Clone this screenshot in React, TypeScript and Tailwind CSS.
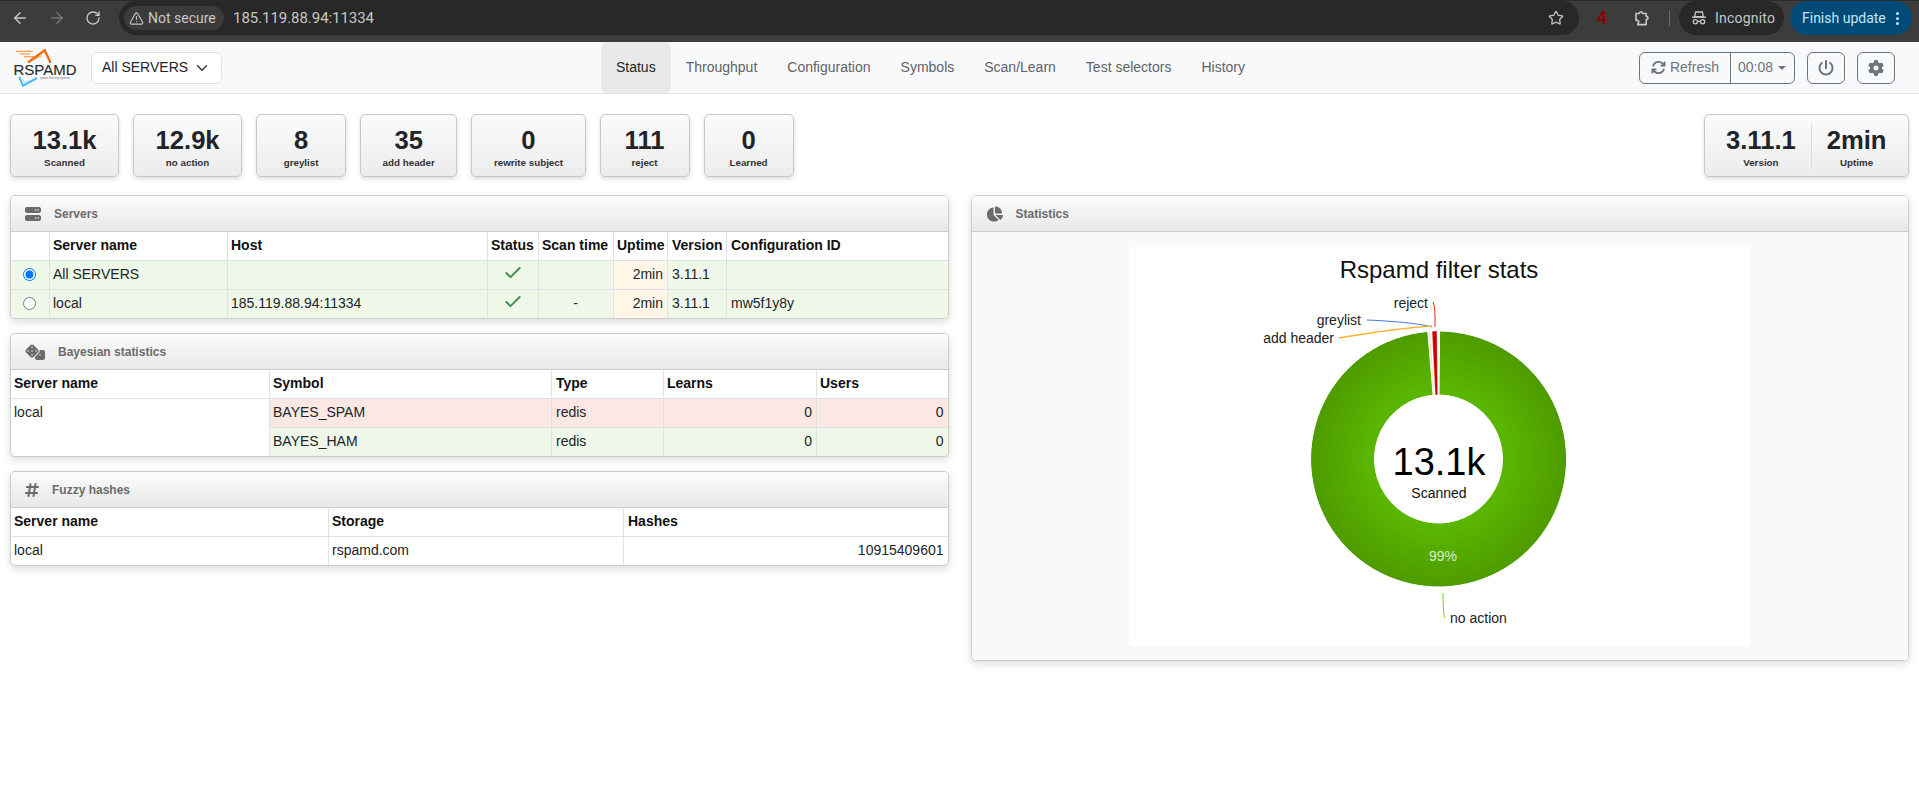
import React from "react";
import { ArrowLeft, ArrowRight, RotateCw, TriangleAlert, Star, Check } from "lucide-react";
import { FaArrowsRotate, FaPowerOff, FaGear, FaServer, FaDice, FaHashtag, FaChartPie } from "react-icons/fa6";

const CX = 309.5;
const CY = 212;

function arc(a0: number, a1: number, r0 = 64, r1 = 128): string {
  const p = (a: number, r: number) => {
    const t = (a * Math.PI) / 180;
    return `${(CX + r * Math.sin(t)).toFixed(2)} ${(CY - r * Math.cos(t)).toFixed(2)}`;
  };
  const large = a1 - a0 > 180 ? 1 : 0;
  return `M${p(a0, r1)} A${r1} ${r1} 0 ${large} 1 ${p(a1, r1)} L${p(a1, r0)} A${r0} ${r0} 0 ${large} 0 ${p(a0, r0)} Z`;
}

function Logo() {
  return (
    <svg width="70" height="44" viewBox="10 46 70 44" className="shrink-0">
      <path d="M14.7 51.3 L32 51.3 M19 54 L29 54 M23 56.8 L33 56.8" stroke="#f58a2a" strokeWidth="1.1" fill="none" />
      <path d="M27 62.5 L43.7 50.2 L49.7 63" stroke="#f26a12" strokeWidth="2.3" fill="none" strokeLinejoin="miter" />
      <path d="M31 60.5 L41 55.5" stroke="#f58a2a" strokeWidth="0.9" fill="none" />
      <text x="12.5" y="74.8" fontSize="15" fill="#2b2b2b" fontFamily="Liberation Sans, sans-serif" stroke="#2b2b2b" strokeWidth="0.15">RSPAMD</text>
      <text x="39" y="79.3" fontSize="3.2" fill="#777" fontFamily="Liberation Sans, sans-serif">spam filtering system</text>
      <path d="M18.2 77 L22 85.8 L36 78" stroke="#4fb9f2" strokeWidth="2.1" fill="none" />
      <path d="M21.5 79 L24 83 L29 80" stroke="#8fd4f7" strokeWidth="0.8" fill="none" />
    </svg>
  );
}

function IncognitoIcon() {
  return (
    <svg width="16" height="16" viewBox="0 0 16 16" fill="none" className="text-[#c7c7c7]">
      <path d="M4.6 2 L11.4 2 L12.3 6.6 L3.7 6.6 Z" stroke="currentColor" strokeWidth="1.3" />
      <path d="M1 7.2 H15" stroke="currentColor" strokeWidth="1.4" />
      <circle cx="4.4" cy="11.8" r="2.1" stroke="currentColor" strokeWidth="1.3" />
      <circle cx="11.6" cy="11.8" r="2.1" stroke="currentColor" strokeWidth="1.3" />
      <path d="M6.5 11.4 H9.5" stroke="currentColor" strokeWidth="1.3" />
    </svg>
  );
}

function ExtensionIcon() {
  return (
    <svg width="18" height="18" viewBox="0 0 18 18" fill="none" className="text-[#c7c7c7]">
      <path
        d="M3 4.5 H6.4 C6.3 2.2 9.7 2.2 9.6 4.5 H13.2 V7.4 C15.6 7.3 15.6 10.7 13.2 10.6 V15.6 H4.6 L5.6 13.4 C6 12.4 5.2 11.4 4.2 11.4 H3 Z"
        stroke="currentColor"
        strokeWidth="1.6"
        strokeLinejoin="round"
      />
    </svg>
  );
}

function BrowserBar() {
  return (
    <div className="h-[42px] bg-[#3c3c3c] border-t border-[#2b2b2b] flex items-start font-['Roboto',sans-serif] text-[#c7c7c7]">
      <div className="flex items-center h-[34px] w-[119px] pl-[11px] gap-[19px] shrink-0">
        <ArrowLeft size={18} strokeWidth={2} />
        <ArrowRight size={18} strokeWidth={2} className="text-[#757575]" />
        <RotateCw size={16} strokeWidth={2} />
      </div>
      <div className="flex-1 h-[34px] bg-[#282828] rounded-full flex items-center pl-[5px] pr-[15px]">
        <div className="h-[24px] w-[100px] rounded-full bg-[#3b3b3b] flex items-center pl-[5px] gap-[4px] text-[14px] shrink-0">
          <TriangleAlert size={15} strokeWidth={1.8} className="shrink-0" />
          <span className="whitespace-nowrap">Not secure</span>
        </div>
        <span className="ml-[9px] text-[15px] tracking-[-0.05px]">185.119.88.94:11334</span>
        <Star size={16} strokeWidth={1.8} className="ml-auto" />
      </div>
      <div className="w-[46px] h-[34px] flex items-center justify-center shrink-0 text-[#8b0000] font-['Liberation_Sans',sans-serif] font-bold text-[18px]">4</div>
      <div className="w-[34px] h-[34px] flex items-center justify-center shrink-0">
        <ExtensionIcon />
      </div>
      <div className="h-[34px] flex items-center shrink-0 ml-[10px]">
        <div className="w-px h-[16px] bg-[#6a6a6a]" />
      </div>
      <div className="ml-[9px] h-[34px] w-[105px] rounded-full bg-[#282828] flex items-center pl-[12px] gap-[8px] text-[14px] tracking-[0.2px] shrink-0">
        <IncognitoIcon />
        <span>Incognito</span>
      </div>
      <div className="ml-[6px] mr-[7px] h-[34px] w-[122px] rounded-full bg-[#004a77] text-[#c2e7ff] flex items-center pl-[12px] text-[14px] shrink-0">
        <span className="whitespace-nowrap">Finish update</span>
        <span className="ml-[10px] flex flex-col gap-[2px]">
          <span className="w-[3px] h-[3px] rounded-full bg-[#c2e7ff]" />
          <span className="w-[3px] h-[3px] rounded-full bg-[#c2e7ff]" />
          <span className="w-[3px] h-[3px] rounded-full bg-[#c2e7ff]" />
        </span>
      </div>
    </div>
  );
}

const NAV = ["Status", "Throughput", "Configuration", "Symbols", "Scan/Learn", "Test selectors", "History"];

function Navbar() {
  return (
    <div className="h-[52px] bg-[#f8f9fa] border-b border-[#dee2e6] flex items-stretch justify-between pl-[11px] pr-[24px] text-[14px]">
      <div className="flex items-center">
        <Logo />
        <div className="ml-[10px] h-[32px] w-[131px] bg-white border border-[#dee2e6] rounded-[6px] flex items-center pl-[10px] text-[#212529]">
          <span>All SERVERS</span>
          <svg width="12" height="12" viewBox="0 0 16 16" fill="none" className="ml-[8px]">
            <path d="M2 5l6 6 6-6" stroke="#343a40" strokeWidth="2" strokeLinecap="round" strokeLinejoin="round" />
          </svg>
        </div>
      </div>
      <div className="flex items-stretch">
        {NAV.map((n, i) => (
          <div
            key={n}
            className={
              i === 0
                ? "px-[15px] flex items-center rounded-[6px] bg-[#e9e9e9] text-[#212529]"
                : "px-[15px] flex items-center text-[#5f6368]"
            }
          >
            {n}
          </div>
        ))}
      </div>
      <div className="flex items-center gap-[12px] text-[#6c757d]">
        <div className="flex h-[32px] border border-[#6c757d] rounded-[6px]">
          <div className="w-[91px] flex items-center justify-center gap-[4px] border-r border-[#6c757d]">
            <FaArrowsRotate size={15} />
            <span>Refresh</span>
          </div>
          <div className="w-[63px] flex items-center pl-[7px] gap-[5px]">
            <span>00:08</span>
            <span className="w-0 h-0 border-x-[4px] border-x-transparent border-t-[4px] border-t-[#6c757d]" />
          </div>
        </div>
        <div className="w-[38px] h-[32px] border border-[#6c757d] rounded-[6px] flex items-center justify-center">
          <FaPowerOff size={16} />
        </div>
        <div className="w-[38px] h-[32px] border border-[#6c757d] rounded-[6px] flex items-center justify-center">
          <FaGear size={16} />
        </div>
      </div>
    </div>
  );
}

const STATS: [string, string][] = [
  ["13.1k", "Scanned"],
  ["12.9k", "no action"],
  ["8", "greylist"],
  ["35", "add header"],
  ["0", "rewrite subject"],
  ["111", "reject"],
  ["0", "Learned"],
];

const boxCls =
  "h-[63px] rounded-[5px] border border-[#c8c8c8] bg-gradient-to-b from-[#fbfbfb] to-[#ececec] shadow-[0_2px_4px_rgba(0,0,0,0.14)]";

function StatCell({ value, label }: { value: string; label: string }) {
  return (
    <div className="flex flex-col items-center text-[#212529] pt-[4px]">
      <span className="text-[25.6px] leading-[30px] font-bold">{value}</span>
      <span className="text-[9.8px] leading-[15px] font-bold text-[#333] whitespace-nowrap">{label}</span>
    </div>
  );
}

function StatsRow() {
  return (
    <div className="flex gap-[14px] px-[10px] pt-[20px]">
      {STATS.map(([v, l]) => (
        <div key={l} className={`${boxCls} min-w-[90px] px-[21.5px] flex items-center justify-center`}>
          <StatCell value={v} label={l} />
        </div>
      ))}
      <div className={`${boxCls} ml-auto flex items-center px-[21.5px]`}>
        <div className="pr-[15px]">
          <StatCell value="3.11.1" label="Version" />
        </div>
        <div className="w-px h-[46px] bg-[#dcdcdc]" />
        <div className="pl-[15px]">
          <StatCell value="2min" label="Uptime" />
        </div>
      </div>
    </div>
  );
}

function Panel({ icon, title, children }: { icon: React.ReactNode; title: string; children: React.ReactNode }) {
  return (
    <div className="border border-[#cccccc] rounded-[5px] shadow-[0_3px_8px_rgba(0,0,0,0.14)] overflow-hidden bg-white">
      <div className="h-[36px] border-b border-[#cccccc] bg-gradient-to-b from-[#fcfcfc] to-[#e8e8e8] flex items-center pl-[14px] text-[#6b6b6b]">
        {icon}
        <span className="ml-[13px] text-[12px] font-bold">{title}</span>
      </div>
      {children}
    </div>
  );
}

const thBase = "border-[#dee2e6] pr-[4px] pt-[3px] pb-[4px] text-left font-bold leading-[21px] text-[#111] whitespace-nowrap overflow-hidden";
const th0 = `${thBase} pl-[3px]`;
const th = `border-l ${thBase} pl-[3px]`;
const th4 = `border-l ${thBase} pl-[4px]`;
const tdBase = "border-t border-[#dee2e6] pr-[4px] pt-[3px] pb-[4px] leading-[21px] text-[#212529] align-top whitespace-nowrap";
const td0 = `${tdBase} pl-[3px]`;
const td = `border-l ${tdBase} pl-[3px]`;
const td4 = `border-l ${tdBase} pl-[4px]`;
const tableCls = "w-full table-fixed border-separate border-spacing-0 text-[14px]";
const ok = "bg-[#eef7e8]";
const bad = "bg-[#fbe8e5]";
const warn = "bg-[#fff6e8]";

function Radio({ checked }: { checked?: boolean }) {
  return (
    <div className="flex items-center justify-center h-[21px]">
      <input type="radio" name="srv" defaultChecked={checked} className="w-[13px] h-[13px] m-0" />
    </div>
  );
}

function OkMark() {
  return (
    <div className="flex justify-center h-[21px] items-center">
      <Check size={20} strokeWidth={2.4} className="text-[#43914f] -mt-[3px]" />
    </div>
  );
}

function ServersTable() {
  return (
    <table className={tableCls}>
      <colgroup>
        <col className="w-[38px]" />
        <col className="w-[178px]" />
        <col className="w-[260px]" />
        <col className="w-[51px]" />
        <col className="w-[75px]" />
        <col className="w-[54px]" />
        <col className="w-[59px]" />
        <col />
      </colgroup>
      <thead>
        <tr>
          <th className={th0}></th>
          <th className={th}>Server name</th>
          <th className={th}>Host</th>
          <th className={th}>Status</th>
          <th className={th}>Scan time</th>
          <th className={th}>Uptime</th>
          <th className={th4}>Version</th>
          <th className={th4}>Configuration ID</th>
        </tr>
      </thead>
      <tbody>
        <tr>
          <td className={`${td0} ${ok}`}><Radio checked /></td>
          <td className={`${td} ${ok}`}>All SERVERS</td>
          <td className={`${td} ${ok}`}></td>
          <td className={`${td} ${ok}`}><OkMark /></td>
          <td className={`${td} ${ok}`}></td>
          <td className={`${td} ${warn} text-right`}>2min</td>
          <td className={`${td4} ${ok}`}>3.11.1</td>
          <td className={`${td4} ${ok}`}></td>
        </tr>
        <tr>
          <td className={`${td0} ${ok}`}><Radio /></td>
          <td className={`${td} ${ok}`}>local</td>
          <td className={`${td} ${ok}`}>185.119.88.94:11334</td>
          <td className={`${td} ${ok}`}><OkMark /></td>
          <td className={`${td} ${ok} text-center`}>-</td>
          <td className={`${td} ${warn} text-right`}>2min</td>
          <td className={`${td4} ${ok}`}>3.11.1</td>
          <td className={`${td4} ${ok}`}>mw5f1y8y</td>
        </tr>
      </tbody>
    </table>
  );
}

function BayesTable() {
  return (
    <table className={tableCls}>
      <colgroup>
        <col className="w-[258px]" />
        <col className="w-[282px]" />
        <col className="w-[112px]" />
        <col className="w-[153px]" />
        <col />
      </colgroup>
      <thead>
        <tr>
          <th className={th0}>Server name</th>
          <th className={th}>Symbol</th>
          <th className={th4}>Type</th>
          <th className={th}>Learns</th>
          <th className={th}>Users</th>
        </tr>
      </thead>
      <tbody>
        <tr>
          <td className={td0} rowSpan={2}>local</td>
          <td className={`${td} ${bad}`}>BAYES_SPAM</td>
          <td className={`${td4} ${bad}`}>redis</td>
          <td className={`${td} ${bad} text-right`}>0</td>
          <td className={`${td} ${bad} text-right`}>0</td>
        </tr>
        <tr>
          <td className={`${td} ${ok}`}>BAYES_HAM</td>
          <td className={`${td4} ${ok}`}>redis</td>
          <td className={`${td} ${ok} text-right`}>0</td>
          <td className={`${td} ${ok} text-right`}>0</td>
        </tr>
      </tbody>
    </table>
  );
}

function FuzzyTable() {
  return (
    <table className={tableCls}>
      <colgroup>
        <col className="w-[317px]" />
        <col className="w-[295px]" />
        <col />
      </colgroup>
      <thead>
        <tr>
          <th className={th0}>Server name</th>
          <th className={th}>Storage</th>
          <th className={th4}>Hashes</th>
        </tr>
      </thead>
      <tbody>
        <tr>
          <td className={td0}>local</td>
          <td className={td}>rspamd.com</td>
          <td className={`${td} text-right`}>10915409601</td>
        </tr>
      </tbody>
    </table>
  );
}

function Chart() {
  return (
    <svg width="621" height="399" viewBox="0 0 621 399" className="bg-white block" fontFamily="Liberation Sans, sans-serif">
      <defs>
        <radialGradient id="g" gradientUnits="userSpaceOnUse" cx={CX} cy={CY} r={128}>
          <stop offset="0%" stopColor="#62c000" />
          <stop offset="55%" stopColor="#5ab500" />
          <stop offset="100%" stopColor="#4e9b00" />
        </radialGradient>
      </defs>
      <text x="310" y="31" textAnchor="middle" fontSize="24" fill="#111">Rspamd filter stats</text>

      <path d={arc(0.5, 355.2)} fill="url(#g)" stroke="#fff" strokeWidth="1" />
      <path d={arc(355.7, 356.2)} fill="#f9c46a" stroke="#fff" strokeWidth="0.4" />
      <path d={arc(357.1, 359.3)} fill="#cc0000" stroke="#fff" strokeWidth="0.4" />

      <text x="299" y="61" textAnchor="end" fontSize="14" fill="#222">reject</text>
      <path d="M304 55 Q306.5 60 306 80" stroke="#ee2222" strokeWidth="1" fill="none" />
      <text x="232" y="78" textAnchor="end" fontSize="14" fill="#222">greylist</text>
      <path d="M238 73 Q285 75 303 80" stroke="#4a7fe8" strokeWidth="1.2" fill="none" />
      <text x="205" y="96" textAnchor="end" fontSize="14" fill="#222">add header</text>
      <path d="M210 91 Q270 81 303 79" stroke="#ffb02e" strokeWidth="1.4" fill="none" />
      <text x="321" y="376" fontSize="14" fill="#222">no action</text>
      <path d="M314 346 Q314 368 316 371" stroke="#7ed321" strokeWidth="1" fill="none" />

      <text x="314" y="313.5" textAnchor="middle" fontSize="14" fill="#ffffff" fillOpacity="0.8">99%</text>
      <text x="310" y="228" textAnchor="middle" fontSize="38" fill="#000">13.1k</text>
      <text x="310" y="251" textAnchor="middle" fontSize="14" fill="#111">Scanned</text>
    </svg>
  );
}

export default function App() {
  return (
    <div className="min-h-[807px] bg-white font-['Liberation_Sans',sans-serif]">
      <BrowserBar />
      <Navbar />
      <StatsRow />
      <div className="grid grid-cols-2 gap-[22px] px-[10px] pt-[18px] items-start">
        <div className="flex flex-col gap-[14px]">
          <Panel icon={<FaServer size={16} />} title="Servers"><ServersTable /></Panel>
          <Panel icon={<FaDice size={16} className="w-[20px]" />} title="Bayesian statistics"><BayesTable /></Panel>
          <Panel icon={<FaHashtag size={16} className="w-[14px]" />} title="Fuzzy hashes"><FuzzyTable /></Panel>
        </div>
        <Panel icon={<FaChartPie size={16} className="w-[17px]" />} title="Statistics">
          <div className="bg-[#f8f9fa] flex justify-center pt-[15px] pb-[14px]">
            <Chart />
          </div>
        </Panel>
      </div>
    </div>
  );
}
